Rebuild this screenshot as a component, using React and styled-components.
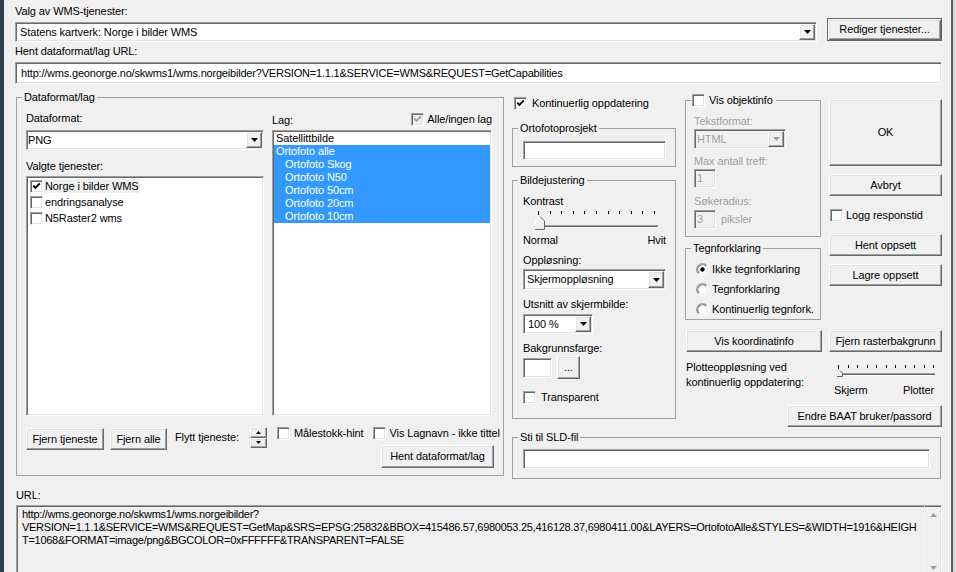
import React from 'react';
import styled, { createGlobalStyle } from 'styled-components';

const GRAY_TEXT = '#a0a0a0';
const HIGHLIGHT = '#3399ff';

const GlobalStyle = createGlobalStyle`
  html, body { margin: 0; padding: 0; background: #f0f0f0; }
  body {
    font-family: "Liberation Sans", Arial, sans-serif;
    font-size: 11px;
    line-height: 13px;
    letter-spacing: -0.1px;
    color: #000;
  }
  *, *::before, *::after { box-sizing: border-box; }
  svg { flex-shrink: 0; }
`;

// classic 3D edges
const raisedEdge = `
  border: 1px solid;
  border-color: #fff #696969 #696969 #fff;
  box-shadow: inset -1px -1px 0 #a0a0a0, inset 1px 1px 0 #e3e3e3;
`;

const sunkenEdge = `
  border: 1px solid;
  border-color: #a0a0a0 #fff #fff #a0a0a0;
  box-shadow: inset 1px 1px 0 #696969, inset -1px -1px 0 #e3e3e3;
`;

const Window = styled.div`
  width: 956px;
  height: 572px;
  overflow: hidden;
  display: flex;
  background: #f0f0f0;
  border-left: 4px solid #34414c;
  border-right: 3px solid #d9d9d9;
`;

const Dialog = styled.div`
  flex: 1;
  min-width: 0;
  display: flex;
  flex-direction: column;
  padding: 5px 0 0 11px;
  border-right: 2px solid #5f5f5f;
`;

const Label = styled.div`
  height: ${({ $h = 13 }) => $h}px;
  line-height: ${({ $lh = 13 }) => $lh}px;
  white-space: nowrap;
  flex-shrink: 0;
  margin-top: ${({ $mt = 0 }) => $mt}px;
  margin-left: ${({ $ml = 0 }) => $ml}px;
  color: ${({ $disabled }) => ($disabled ? GRAY_TEXT : '#000')};
`;

const Row = styled.div`
  display: flex;
  align-items: ${({ $align = 'flex-start' }) => $align};
  justify-content: ${({ $justify = 'flex-start' }) => $justify};
  gap: ${({ $gap = 0 }) => $gap}px;
  margin-top: ${({ $mt = 0 }) => $mt}px;
  margin-left: ${({ $ml = 0 }) => $ml}px;
  flex-shrink: 0;
`;

const Column = styled.div`
  display: flex;
  flex-direction: column;
  width: ${({ $w }) => ($w ? `${$w}px` : 'auto')};
  margin-top: ${({ $mt = 0 }) => $mt}px;
  margin-left: ${({ $ml = 0 }) => $ml}px;
  flex-shrink: 0;
`;

const Field = styled.div`
  ${sunkenEdge}
  flex-shrink: 0;
  display: flex;
  align-items: center;
  width: ${({ $w }) => $w}px;
  height: ${({ $h = 20 }) => $h}px;
  margin-top: ${({ $mt = 0 }) => $mt}px;
  margin-left: ${({ $ml = 0 }) => $ml}px;
  padding-left: ${({ $pl = 3 }) => $pl}px;
  background: ${({ $disabled }) => ($disabled ? '#f0f0f0' : '#fff')};
  color: ${({ $disabled }) => ($disabled ? GRAY_TEXT : '#000')};
  letter-spacing: ${({ $tight }) => ($tight ? '-0.2px' : 'inherit')};
  white-space: nowrap;
  overflow: hidden;
`;

const ComboFrame = styled(Field)`
  padding-right: 1px;
`;

const ComboValue = styled.span`
  flex: 1;
  overflow: hidden;
`;

const DropButton = styled.span`
  ${raisedEdge}
  width: 16px;
  height: calc(100% - 2px);
  flex-shrink: 0;
  display: flex;
  align-items: center;
  justify-content: center;
  background: #f0f0f0;
`;

const Button = styled.button`
  ${raisedEdge}
  flex-shrink: 0;
  width: ${({ $w }) => $w}px;
  height: ${({ $h = 22 }) => $h}px;
  margin: ${({ $mt = 0 }) => $mt}px 0 0 ${({ $ml = 0 }) => $ml}px;
  align-self: ${({ $self = 'auto' }) => $self};
  padding: 0;
  background: #f0f0f0;
  font: inherit;
  letter-spacing: inherit;
  color: #000;
  display: flex;
  align-items: center;
  justify-content: center;
  white-space: nowrap;
  ${({ $default }) => $default && `
    border-color: #646464;
    box-shadow: inset 1px 1px 0 #fff, inset -1px -1px 0 #696969, inset 2px 2px 0 #e3e3e3, inset -2px -2px 0 #a0a0a0;
  `}
`;

const CheckFrame = styled.span`
  ${sunkenEdge}
  width: 13px;
  height: 13px;
  flex-shrink: 0;
  display: flex;
  align-items: center;
  justify-content: center;
  background: ${({ $disabled }) => ($disabled ? '#f0f0f0' : '#fff')};
`;

const CheckRow = styled.div`
  display: flex;
  align-items: center;
  gap: ${({ $gap = 4 }) => $gap}px;
  height: 13px;
  white-space: nowrap;
  flex-shrink: 0;
  margin-top: ${({ $mt = 0 }) => $mt}px;
  margin-left: ${({ $ml = 0 }) => $ml}px;
`;

const Group = styled.fieldset`
  margin: ${({ $mt = 0 }) => $mt}px 0 0 0;
  width: ${({ $w }) => $w}px;
  padding: ${({ $pad }) => $pad};
  border: 1px solid #a0a0a0;
  min-width: 0;
  flex-shrink: 0;
`;

const Legend = styled.legend`
  padding: ${({ $pad = '0 2px' }) => $pad};
  margin-left: ${({ $ml = -5 }) => $ml}px;
  height: 13px;
  line-height: 13px;
  white-space: nowrap;
`;

const LegendInner = styled.span`
  display: inline-flex;
  align-items: center;
  gap: 4px;
  height: 13px;
`;

const ListBox = styled.div`
  ${sunkenEdge}
  padding: 1px;
  width: ${({ $w }) => $w}px;
  height: ${({ $h }) => $h}px;
  margin-top: ${({ $mt = 0 }) => $mt}px;
  background: #fff;
  overflow: hidden;
  flex-shrink: 0;
`;

const ServiceItem = styled.div`
  display: flex;
  align-items: center;
  height: 16px;
  padding-left: 2px;
  white-space: nowrap;
`;

const ServiceName = styled.span`
  margin-left: 1px;
  padding: 0 1px;
  line-height: 14px;
  background: ${({ $selected }) => ($selected ? '#f0f0f0' : 'transparent')};
`;

const LayerItem = styled.div`
  height: 13px;
  line-height: 13px;
  white-space: nowrap;
  padding-left: ${({ $level = 0 }) => 2 + $level * 9}px;
  background: ${({ $selected }) => ($selected ? HIGHLIGHT : 'transparent')};
  color: ${({ $selected }) => ($selected ? '#fff' : '#000')};
`;

const SliderBox = styled.div`
  width: ${({ $w }) => $w}px;
  flex-shrink: 0;
`;

const SliderEnds = styled.div`
  display: flex;
  justify-content: space-between;
  height: 13px;
  line-height: 13px;
  padding-right: ${({ $pr = 0 }) => $pr}px;
`;

const SpinBox = styled.div`
  display: flex;
  flex-direction: column;
  width: 17px;
  height: 21px;
  flex-shrink: 0;
`;

const SpinHalf = styled.span`
  ${raisedEdge}
  flex: 1;
  display: flex;
  align-items: center;
  justify-content: center;
  background: #f0f0f0;
`;

const UrlArea = styled.div`
  ${sunkenEdge}
  display: flex;
  width: 926px;
  height: 72px;
  margin: 3px 0 0 1px;
  background: #f0f0f0;
  flex-shrink: 0;
`;

const UrlText = styled.div`
  flex: 1;
  min-width: 0;
  padding: 2px 0 0 5px;
  white-space: pre;
  overflow: hidden;
  letter-spacing: -0.28px;
`;

const ScrollBar = styled.div`
  width: 17px;
  flex-shrink: 0;
  display: flex;
  flex-direction: column;
  justify-content: space-between;
  border-left: 1px solid #f7f7f7;
`;

const ScrollArrow = styled.div`
  height: 17px;
  display: flex;
  align-items: center;
  justify-content: center;
`;

const PlotText = styled.div`
  line-height: 15px;
  margin-left: 1px;
  white-space: nowrap;
`;

const ColorSwatch = styled(Field)`
  background: #fff;
`;

const FlyttLabel = styled(Label)`
  width: 75px;
`;

const SelectionGrid = styled.div`
  display: grid;
  grid-template-columns: 238px 220px;
  column-gap: 8px;
`;

function Arrow({ dir = 'down', color = '#000' }) {
  return (
    <svg width="7" height="4" viewBox="0 0 7 4">
      <path d={dir === 'down' ? 'M0 0h7L3.5 4z' : 'M0 4h7L3.5 0z'} fill={color} />
    </svg>
  );
}

function SmallArrow({ dir }) {
  return (
    <svg width="5" height="3" viewBox="0 0 5 3">
      <path d={dir === 'down' ? 'M0 0h5L2.5 3z' : 'M0 3h5L2.5 0z'} fill="#000" />
    </svg>
  );
}

function Combo({ value, w, h, mt, pl, disabled }) {
  return (
    <ComboFrame $w={w} $h={h} $mt={mt} $pl={pl} $disabled={disabled}>
      <ComboValue>{value}</ComboValue>
      <DropButton>
        <Arrow color={disabled ? GRAY_TEXT : '#000'} />
      </DropButton>
    </ComboFrame>
  );
}

function CheckBox({ checked, disabled }) {
  return (
    <CheckFrame $disabled={disabled}>
      {checked && (
        <svg width="9" height="9" viewBox="0 0 9 9">
          <path d="M1.2 3.6L3.4 5.8L7.8 1.4" fill="none" stroke={disabled ? GRAY_TEXT : '#000'} strokeWidth="1.9" />
        </svg>
      )}
    </CheckFrame>
  );
}

function Check({ label, checked, gap, mt, ml }) {
  return (
    <CheckRow $gap={gap} $mt={mt} $ml={ml}>
      <CheckBox checked={checked} />
      <span>{label}</span>
    </CheckRow>
  );
}

function Radio({ label, selected, mt }) {
  return (
    <CheckRow $gap={3} $mt={mt}>
      <svg width="13" height="13" viewBox="0 0 12 12">
        <circle cx="6" cy="6" r="5.5" fill="#fff" />
        <path d="M2.11 9.89A5.5 5.5 0 0 1 9.89 2.11" fill="none" stroke="#a0a0a0" />
        <path d="M9.89 2.11A5.5 5.5 0 0 1 2.11 9.89" fill="none" stroke="#fff" />
        <path d="M2.82 9.18A4.5 4.5 0 0 1 9.18 2.82" fill="none" stroke="#696969" />
        <path d="M9.18 2.82A4.5 4.5 0 0 1 2.82 9.18" fill="none" stroke="#e3e3e3" />
        {selected && <circle cx="6" cy="6" r="2" fill="#000" />}
      </svg>
      <span>{label}</span>
    </CheckRow>
  );
}

function SliderTrack({ w, h, ticksFrom, tickStep, tickY, trackFrom, trackTo, trackY, thumb }) {
  const ticks = Array.from({ length: 11 }, (_, i) => Math.round(ticksFrom + i * tickStep));
  const { x, y, w: tw, h: th, tip } = thumb;
  return (
    <svg width={w} height={h} viewBox={`0 0 ${w} ${h}`}>
      {ticks.map((tx, i) => (
        <rect key={tx} x={tx} y={tickY} width="1" height={i === 0 ? 4 : 3} fill="#000" />
      ))}
      <rect x={trackFrom} y={trackY} width={trackTo - trackFrom} height="1" fill="#a0a0a0" />
      <rect x={trackFrom} y={trackY + 1} width={trackTo - trackFrom} height="1" fill="#696969" />
      <rect x={trackFrom} y={trackY + 2} width={trackTo - trackFrom} height="1" fill="#fff" />
      <polygon
        points={`${x},${y + tip} ${x + tw / 2},${y} ${x + tw},${y + tip} ${x + tw},${y + th} ${x},${y + th}`}
        fill="#f0f0f0"
      />
      <polyline
        points={`${x + 0.5},${y + th} ${x + 0.5},${y + tip} ${x + tw / 2},${y + 0.5}`}
        fill="none"
        stroke="#fff"
      />
      <polyline
        points={`${x + tw / 2},${y + 0.5} ${x + tw - 0.5},${y + tip} ${x + tw - 0.5},${y + th - 0.5} ${x},${y + th - 0.5}`}
        fill="none"
        stroke="#696969"
      />
    </svg>
  );
}

const layers = [
  { name: 'Satellittbilde', level: 0, selected: false },
  { name: 'Ortofoto alle', level: 0, selected: true },
  { name: 'Ortofoto Skog', level: 1, selected: true },
  { name: 'Ortofoto N50', level: 1, selected: true },
  { name: 'Ortofoto 50cm', level: 1, selected: true },
  { name: 'Ortofoto 20cm', level: 1, selected: true },
  { name: 'Ortofoto 10cm', level: 1, selected: true },
];

const services = [
  { name: 'Norge i bilder WMS', checked: true },
  { name: 'endringsanalyse', checked: false },
  { name: 'N5Raster2 wms', checked: false },
];

const urlLines = [
  'http://wms.geonorge.no/skwms1/wms.norgeibilder?',
  'VERSION=1.1.1&SERVICE=WMS&REQUEST=GetMap&SRS=EPSG:25832&BBOX=415486.57,6980053.25,416128.37,6980411.00&LAYERS=OrtofotoAlle&STYLES=&WIDTH=1916&HEIGH',
  'T=1068&FORMAT=image/png&BGCOLOR=0xFFFFFF&TRANSPARENT=FALSE',
];

export default function App() {
  return (
    <>
      <GlobalStyle />
      <Window>
        <Dialog>
          <Label>Valg av WMS-tjenester:</Label>
          <Row $gap={10}>
            <Combo value="Statens kartverk: Norge i bilder WMS" w={802} h={20} mt={4} pl={4} />
            <Button $w={115} $h={23} $default>Rediger tjenester...</Button>
          </Row>
          <Label $mt={3}>Hent dataformat/lag URL:</Label>
          <Field $w={927} $h={22} $mt={4} $pl={5} $tight>
            http://wms.geonorge.no/skwms1/wms.norgeibilder?VERSION=1.1.1&amp;SERVICE=WMS&amp;REQUEST=GetCapabilities
          </Field>

          <Row $mt={7} $ml={1} $gap={8}>
            <Group $w={488} $pad="8px 9px 7px 9px">
              <Legend $ml={-4}>Dataformat/lag</Legend>
              <SelectionGrid>
                <Column>
                  <Label>Dataformat:</Label>
                  <Combo value="PNG" w={238} h={20} mt={5} pl={1} />
                  <Label $mt={10}>Valgte tjenester:</Label>
                  <ListBox $w={238} $h={240} $mt={3}>
                    {services.map((s, i) => (
                      <ServiceItem key={s.name}>
                        <CheckBox checked={s.checked} />
                        <ServiceName $selected={i === 0}>{s.name}</ServiceName>
                      </ServiceItem>
                    ))}
                  </ListBox>
                </Column>
                <Column>
                  <Row $justify="space-between">
                    <Label $mt={2}>Lag:</Label>
                    <Row $mt={1} $align="center">
                      <CheckBox checked disabled />
                      <Label $ml={3}>Alle/ingen lag</Label>
                    </Row>
                  </Row>
                  <ListBox $w={220} $h={286} $mt={3}>
                    {layers.map((l) => (
                      <LayerItem key={l.name} $level={l.level} $selected={l.selected}>{l.name}</LayerItem>
                    ))}
                  </ListBox>
                </Column>
              </SelectionGrid>

              <Row $mt={11}>
                <Button $w={78} $mt={1}>Fjern tjeneste</Button>
                <Button $w={57} $mt={1} $ml={6}>Fjern alle</Button>
                <FlyttLabel $mt={4} $ml={8}>Flytt tjeneste:</FlyttLabel>
                <SpinBox>
                  <SpinHalf><SmallArrow dir="up" /></SpinHalf>
                  <SpinHalf><SmallArrow dir="down" /></SpinHalf>
                </SpinBox>
                <Column $w={217} $ml={10}>
                  <Row>
                    <Check label="Målestokk-hint" />
                    <Check label="Vis Lagnavn - ikke tittel" ml={9} />
                  </Row>
                  <Button $w={113} $h={23} $mt={5} $self="flex-end">Hent dataformat/lag</Button>
                </Column>
              </Row>
            </Group>

            <Column $w={430}>
              <Row $gap={9}>
                <Column $w={164}>
                  <Check label="Kontinuerlig oppdatering" checked gap={5} mt={6} ml={2} />
                  <Group $w={164} $mt={12} $pad="6px 10px 6px 10px">
                    <Legend>Ortofotoprosjekt</Legend>
                    <Field $w={143} $h={19} />
                  </Group>
                  <Group $w={164} $mt={7} $pad="8px 10px 14px 10px">
                    <Legend>Bildejustering</Legend>
                    <Label>Kontrast</Label>
                    <SliderBox $w={143}>
                      <SliderTrack
                        w={143}
                        h={23}
                        ticksFrom={15}
                        tickStep={11.6}
                        tickY={3}
                        trackFrom={21}
                        trackTo={135}
                        trackY={17}
                        thumb={{ x: 12, y: 8, w: 10, h: 14, tip: 5 }}
                      />
                      <SliderEnds>
                        <span>Normal</span>
                        <span>Hvit</span>
                      </SliderEnds>
                    </SliderBox>
                    <Label $mt={7}>Oppløsning:</Label>
                    <Combo value="Skjermoppløsning" w={143} h={21} mt={2} pl={3} />
                    <Label $mt={8}>Utsnitt av skjermbilde:</Label>
                    <Combo value="100 %" w={70} h={20} mt={3} pl={4} />
                    <Label $mt={8}>Bakgrunnsfarge:</Label>
                    <Row $mt={1} $align="center" $gap={5}>
                      <ColorSwatch $w={29} $h={20} />
                      <Button $w={23} $h={23}>...</Button>
                    </Row>
                    <Check label="Transparent" gap={5} mt={12} />
                  </Group>
                </Column>

                <Column $w={257}>
                  <Row $gap={8}>
                    <Column $w={136}>
                      <Group $w={136} $mt={3} $pad="8px 8px 7px 8px">
                        <Legend $ml={-3} $pad="0 3px 0 1px">
                          <LegendInner>
                            <CheckBox />
                            <span>Vis objektinfo</span>
                          </LegendInner>
                        </Legend>
                        <Label $disabled>Tekstformat:</Label>
                        <Combo value="HTML" w={92} h={20} mt={1} pl={2} disabled />
                        <Label $mt={6} $disabled>Max antall treff:</Label>
                        <Field $w={22} $h={19} $mt={1} $pl={2} $disabled>1</Field>
                        <Label $mt={7} $disabled>Søkeradius:</Label>
                        <Row $mt={2} $align="center">
                          <Field $w={22} $h={19} $pl={2} $disabled>3</Field>
                          <Label $ml={5} $disabled>piksler</Label>
                        </Row>
                      </Group>
                      <Group $w={136} $mt={5} $pad="8px 10px 3px 10px">
                        <Legend>Tegnforklaring</Legend>
                        <Radio label="Ikke tegnforklaring" selected />
                        <Radio label="Tegnforklaring" mt={7} />
                        <Radio label="Kontinuerlig tegnfork." mt={7} />
                      </Group>
                    </Column>
                    <Column $w={113}>
                      <Button $w={113} $h={67} $mt={8}>OK</Button>
                      <Button $w={113} $h={22} $mt={8}>Avbryt</Button>
                      <Check label="Logg responstid" gap={3} mt={13} ml={1} />
                      <Button $w={113} $h={22} $mt={12}>Hent oppsett</Button>
                      <Button $w={113} $h={22} $mt={8}>Lagre oppsett</Button>
                    </Column>
                  </Row>
                  <Row $mt={10} $ml={1} $gap={7}>
                    <Button $w={136}>Vis koordinatinfo</Button>
                    <Button $w={113}>Fjern rasterbakgrunn</Button>
                  </Row>
                  <Row $mt={8} $justify="space-between">
                    <PlotText>
                      Plotteoppløsning ved
                      <br />
                      kontinuerlig oppdatering:
                    </PlotText>
                    <SliderBox $w={108}>
                      <SliderTrack
                        w={108}
                        h={21}
                        ticksFrom={4}
                        tickStep={9.5}
                        tickY={5}
                        trackFrom={9}
                        trackTo={101}
                        trackY={13}
                        thumb={{ x: 3, y: 10, w: 6, h: 7, tip: 3 }}
                      />
                      <SliderEnds $pr={8}>
                        <span>Skjerm</span>
                        <span>Plotter</span>
                      </SliderEnds>
                    </SliderBox>
                  </Row>
                  <Button $w={155} $mt={8} $self="flex-end">Endre BAAT bruker/passord</Button>
                </Column>
              </Row>

              <Group $w={429} $mt={4} $pad="5px 10px 9px 10px">
                <Legend>Sti til SLD-fil</Legend>
                <Field $w={407} $h={20} />
              </Group>
            </Column>
          </Row>

          <Label $mt={10} $ml={1}>URL:</Label>
          <UrlArea>
            <UrlText>
              {urlLines.map((line) => (
                <div key={line}>{line}</div>
              ))}
            </UrlText>
            <ScrollBar>
              <ScrollArrow><Arrow dir="up" color="#a0a0a0" /></ScrollArrow>
              <ScrollArrow><Arrow dir="down" color="#a0a0a0" /></ScrollArrow>
            </ScrollBar>
          </UrlArea>
        </Dialog>
      </Window>
    </>
  );
}
